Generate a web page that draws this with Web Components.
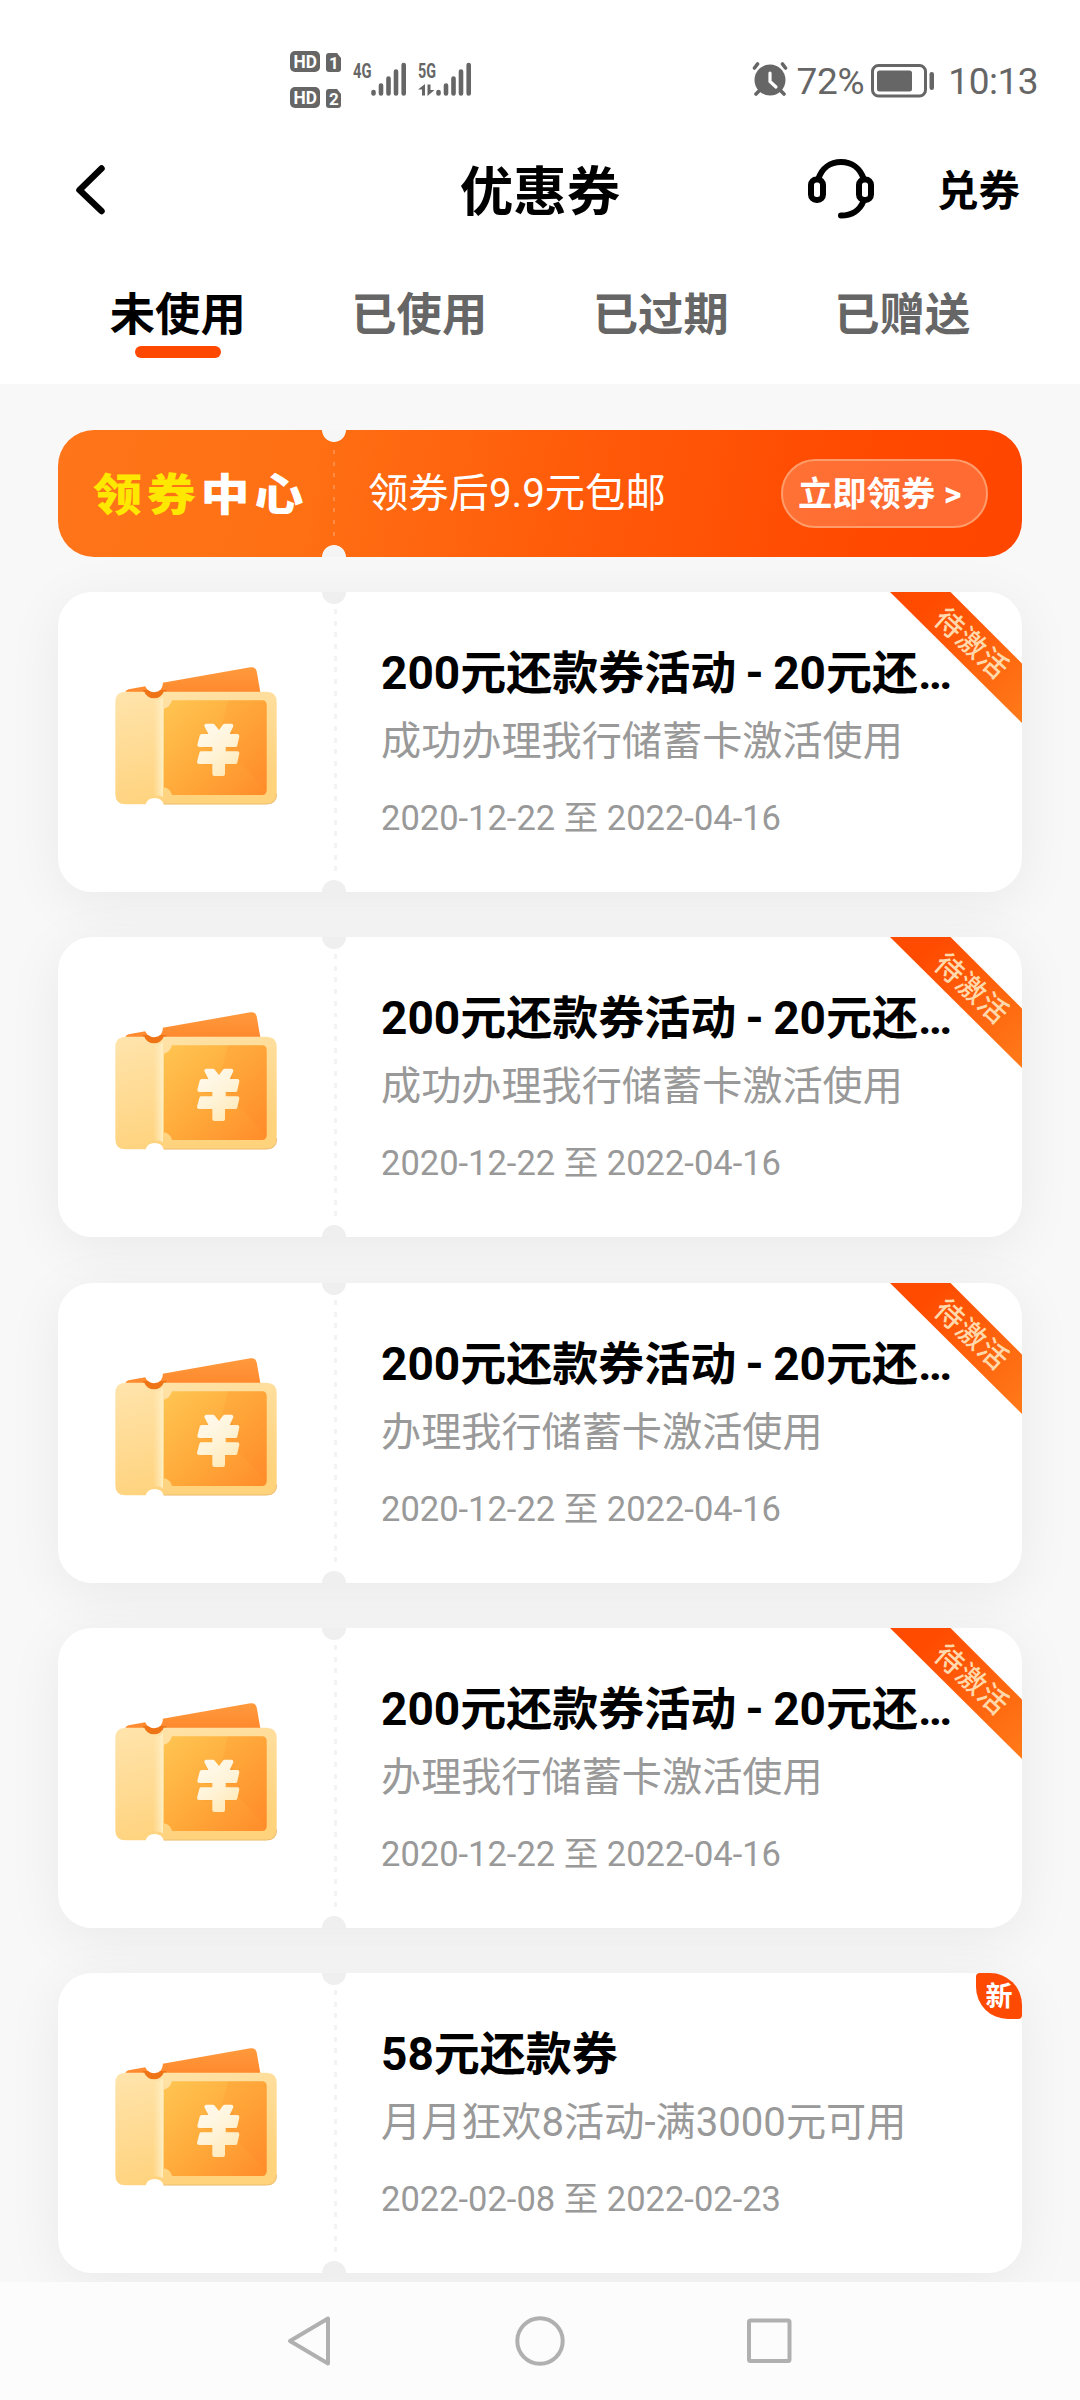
<!DOCTYPE html>
<html lang="zh-CN">
<head>
<meta charset="utf-8">
<title>优惠券</title>
<style>
html,body{margin:0;padding:0}
body{width:1080px;height:2400px;overflow:hidden;background:#f8f8f8;font-family:Roboto,"Noto Sans CJK SC",sans-serif}
</style>
</head>
<body>
<coupon-app></coupon-app>
<script>
const define = (name, html) => {
  const t = document.createElement('template');
  t.innerHTML = html;
  customElements.define(name, class extends HTMLElement {
    constructor() {
      super();
      this.attachShadow({mode: 'open'}).appendChild(t.content.cloneNode(true));
    }
  });
};

define('status-bar', `
<style>
:host{display:flex;height:142px;box-sizing:border-box;padding:40px 42px 0 282px;justify-content:space-between;color:#666}
svg{display:block;flex:none}
.right{display:flex;height:80px;align-items:center;font-size:37px;line-height:44px}
.pct{margin-left:9px;letter-spacing:-.3px;padding-top:4px}
.bat{margin-left:7px;margin-top:1px}
.time{margin-left:13px;letter-spacing:-.5px;padding-top:4px}
</style>
<svg width="200" height="80" viewBox="282 40 200 80" fill="#666" font-family="Roboto" font-weight="700">
  <rect x="290" y="51" width="30" height="21" rx="5"/>
  <path d="M329 53h8l4 5v11q0 3-3 3h-9q-3 0-3-3V56q0-3 3-3z"/>
  <rect x="290" y="87" width="30" height="21" rx="5"/>
  <path d="M329 89h8l4 5v11q0 3-3 3h-9q-3 0-3-3V92q0-3 3-3z"/>
  <g fill="#fff" font-size="18.5">
    <text x="293.5" y="68.2" textLength="23.5" lengthAdjust="spacingAndGlyphs">HD</text>
    <text x="293.5" y="104.2" textLength="23.5" lengthAdjust="spacingAndGlyphs">HD</text>
    <text x="329" y="69" font-size="17">1</text>
    <text x="329" y="105" font-size="17">2</text>
  </g>
  <g font-size="20">
    <text x="353" y="77.5" textLength="18.5" lengthAdjust="spacingAndGlyphs">4G</text>
    <text x="418" y="77.5" textLength="18" lengthAdjust="spacingAndGlyphs">5G</text>
  </g>
  <g stroke="#666" stroke-width="4.6" stroke-linecap="round">
    <path d="M373.5 92v1.5M381 85.500v8M388.500 78.500v15M396 71.500v22M403.700 65v28.500"/>
    <path d="M438.500 92v1.500M446 85.500v8M453.500 78.500v15M461 71.500v22M468.700 65v28.500"/>
  </g>
  <path d="M425 84v11.500h-3v-6h-4zM427.500 84.500h3v5.500h4l-7 6z"/>
</svg>
<div class="right">
  <svg width="36" height="36" viewBox="0 0 36 36" fill="none" stroke="#666" stroke-linecap="round" style="margin-top:-4px">
    <circle cx="18" cy="20" r="15.500" fill="#666" stroke="none"/>
    <path d="M2.500 8l3-4M33.500 8l-3-4M7 31l-3 3M29 31l3 3" stroke-width="3.600"/>
    <path d="M18 13v8.500l6 5.500" stroke="#fff" stroke-width="3.200" stroke-linejoin="round"/>
  </svg>
  <span class="pct">72%</span>
  <svg class="bat" width="64" height="34" viewBox="0 0 64 34" fill="#666">
    <rect x="1.500" y="1.500" width="53" height="30.500" rx="6" fill="none" stroke="#666" stroke-width="3"/>
    <rect x="6" y="6.500" width="35" height="21" rx="2.500"/>
    <rect x="58.500" y="8" width="4.500" height="18" rx="2.200"/>
  </svg>
  <span class="time">10:13</span>
</div>`);

define('title-bar', `
<style>
:host{display:grid;grid-template-columns:1fr auto 1fr;align-items:center;height:96px;padding:0 60px 0 73px;color:#000;font-weight:700}
h1{margin:0;font-size:53.500px;line-height:64px;font-weight:700;padding-right:13px;padding-top:5px}
svg{display:block}
.r{display:flex;justify-content:flex-end;align-items:center;gap:62px;font-size:41.500px;line-height:50px}
.r svg{margin-top:-2px}
.r span{padding-top:4px}
</style>
<svg width="36" height="54" viewBox="0 0 36 54" fill="none" stroke="#000" stroke-width="6.500" stroke-linecap="round" stroke-linejoin="round"><path d="M28.500 5.500L6.500 27l22 21"/></svg>
<h1><slot></slot></h1>
<div class="r">
<svg width="68" height="62" viewBox="0 0 68 62" fill="none" stroke="#000" stroke-width="6" stroke-linecap="round">
  <path d="M11.500 20.500C15 10 23.500 4 34 4s19 6 22.500 16.500M56.500 43C53 52 45 57.500 34 57.500"/>
  <rect x="4" y="21.500" width="12" height="20.500" rx="5.500"/>
  <rect x="52" y="21.500" width="12" height="20.500" rx="5.500"/>
</svg>
<span><slot name="action"></slot></span></div>`);

define('tab-item', `
<style>
:host{flex:1;display:flex;flex-direction:column;align-items:center;font-size:45.300px;line-height:56px;font-weight:700;color:#666}
:host([active]){color:#000}
i{display:none;width:86px;height:12px;border-radius:6px;background:#ff4800;margin-top:2px}
:host([active]) i{display:block}
</style><span><slot></slot></span><i></i>`);

define('tab-row', `
<style>:host{display:flex;height:146px;box-sizing:border-box;padding:50px 57px 0}</style><slot></slot>`);

define('promo-banner', `
<style>
:host{display:flex;align-items:center;position:relative;box-sizing:border-box;height:127px;border-radius:36px;padding:0 34px 0 35px;color:#fff;
 background:radial-gradient(circle at 276px 0,#f6f6f6 11.500px,transparent 12.300px),radial-gradient(circle at 276px 100%,#f4f4f4 11.500px,transparent 12.300px),linear-gradient(100deg,#ff7519 0%,#ff7014 25%,#ff5a09 55%,#ff4800 85%,#ff4600 100%)}
.logo{width:241px;display:flex;font:900 49px/50px "Noto Sans CJK SC",sans-serif;letter-spacing:4.800px;flex:none;transform:scaleY(.9);margin-top:-4px}
.logo b{font-weight:900;color:#ffe800}
.dots{width:2px;height:88px;flex:none;background:repeating-linear-gradient(#ff8b45 0 4px,transparent 4px 11.700px);margin-left:-1px}
.msg{margin-left:33px;font-size:40.300px;line-height:50px;flex:1;white-space:nowrap;padding-top:1px}
.btn{box-sizing:border-box;width:207px;height:69px;border:2.500px solid #ff9c6c;border-radius:35px;background:rgba(255,255,255,.2);font-size:34.300px;font-weight:700;line-height:67px;padding-left:15px;white-space:nowrap}
</style>
<div class="logo"><b>领券</b><span>中心</span></div><div class="dots"></div>
<div class="msg"><slot></slot></div><div class="btn">立即领券 &gt;</div>`);

define('ticket-icon', `
<style>:host{display:block}svg{display:block}</style>
<svg width="166.700" height="141.700" viewBox="70 75 500 425">
  <defs>
    <linearGradient id="a" x1="0" y1="0" x2=".35" y2="1"><stop offset="0" stop-color="#ffe4ac"/><stop offset="1" stop-color="#ffd27c"/></linearGradient>
    <linearGradient id="b" x1="0" y1="0" x2="1" y2="1"><stop offset="0" stop-color="#ffc552"/><stop offset=".5" stop-color="#ffab3b"/><stop offset="1" stop-color="#ff8c2a"/></linearGradient>
    <linearGradient id="c" x1="0" y1="0" x2="0" y2="1"><stop offset="0" stop-color="#ff9a3d"/><stop offset="1" stop-color="#ff8228"/></linearGradient>
    <linearGradient id="d" x1="0" y1="0" x2="1" y2="0"><stop offset="0" stop-color="#ffe9b8" stop-opacity="0"/><stop offset="1" stop-color="#ffefc4"/></linearGradient>
    <linearGradient id="e" gradientUnits="userSpaceOnUse" x1="330" y1="250" x2="440" y2="400"><stop offset="0" stop-color="#fffaf0"/><stop offset=".5" stop-color="#fff4da"/><stop offset="1" stop-color="#ffe8b4"/></linearGradient>
  </defs>
  <path d="M107 156q2-6 10-8l50-9q10 20 30 17 22-3 22-28l263-46q15-3 19 12l11 63v30H150z" fill="url(#c)"/>
  <path d="M160 150h70v40h-70z" fill="#ef7415"/>
  <path d="M167 139q10 20 30 17 22-3 22-28z" fill="#fff"/>
  <path d="M108 155h56a30 27 0 0 0 58 0h308q31 0 31 31v276q0 31-31 31H222a28 26 0 0 0-54 0h-60q-31 0-31-31V186q0-31 31-31z" fill="url(#a)"/>
  <path d="M190 182q22 0 30-12v302q-8-7-30-6z" fill="url(#d)"/>
  <path d="M222 492h308q31 0 31-31" fill="none" stroke="#e9b86e" stroke-width="2.500"/>
  <path d="M247 181h270q14 0 14 14v256q0 14-14 14H247q-4-18-24-23V206q18-4 24-25z" fill="url(#b)"/>
  <path d="M415 181h102q14 0 14 14v256L386 300z" fill="#ff7e2a" opacity=".13"/>
  <g fill="none" stroke="#f08a22" opacity=".3" stroke-linejoin="round" stroke-width="33" transform="translate(3 5)"><path d="M360 262l27 37 28-37M339 302h94M339 352h94M387 300v92"/></g>
  <g fill="url(#e)" stroke="url(#e)" stroke-width="12" stroke-linejoin="round"><path d="M350 257h20l18 23 17-23h20l-14 31h32l-6 27h-35v25h41l-6 26h-37v36h-26v-36h-46l7-26h39v-25h-45l7-27h30z"/></g>
</svg>`);

define('coupon-card', `
<style>
:host{display:flex;position:relative;box-sizing:border-box;height:300px;flex:none;border-radius:34px;background:#fff;box-shadow:0 10px 55px rgba(0,0,0,.062)}
.pic{width:276px;box-sizing:border-box;padding:73px 0 0 55.300px;flex:none}
.cut{width:3px;margin:17px 0 14px;background:repeating-linear-gradient(#f3f3f3 0 5px,transparent 5px 11.700px);flex:none}
.n{position:absolute;left:264px;width:24px;height:12px;background:#efefef}
.n.t{top:0;border-radius:0 0 12px 12px}.n.b{bottom:0;border-radius:12px 12px 0 0}
.txt{padding:53px 0 0 44px;white-space:nowrap}
h2{margin:0;font-size:46px;line-height:56px;font-weight:700;color:#000;word-spacing:-2px}
p{margin:13px 0 0;font-size:40.150px;line-height:56px;color:#999}
time{display:block;margin-top:26px;font-size:34.500px;line-height:44px;color:#999}
slot[name=mark]{display:block;position:absolute;right:0;top:0}
</style>
<div class="pic"><ticket-icon></ticket-icon></div><div class="cut"></div>
<div class="n t"></div><div class="n b"></div>
<div class="txt"><h2><slot name="title"></slot></h2><p><slot name="desc"></slot></p><time><slot></slot></time></div>
<slot name="mark"></slot>`);

define('pending-ribbon', `
<style>:host{display:block}svg{display:block}</style>
<svg width="132" height="132" viewBox="0 0 132 132">
<defs><linearGradient id="g" x1="0" y1="0" x2="1" y2="1"><stop offset=".2" stop-color="#ff4b00"/><stop offset="1" stop-color="#ff7b1a"/></linearGradient></defs>
<path d="M0 0H60.500L132 71.500V131z" fill="url(#g)"/>
<text x=".5" y="10.500" text-anchor="middle" transform="translate(81.700 51) rotate(42.500)" font-family="Noto Sans CJK SC" font-weight="500" font-size="28.500" letter-spacing="1" fill="#ffd9ac">待激活</text>
</svg>`);

define('new-badge', `
<style>:host{display:flex;width:46px;height:46px;background:#ff4a04;border-radius:4px 32px 4px 32px;justify-content:center;align-items:center;color:#fff;font-size:27px;line-height:40px;font-weight:700}</style><span style="padding-top:1px">新</span>`);

define('nav-bar', `
<style>:host{display:flex;justify-content:space-between;height:118px;box-sizing:border-box;padding:31px 286px 0 284px;background:#fcfcfc;position:relative}svg{display:block}</style>
<svg width="52" height="56" viewBox="0 0 52 56" fill="none" stroke="#b0b0b0" stroke-width="4" stroke-linejoin="round"><path d="M44 5.500v45L6 28z"/></svg>
<svg width="56" height="56" viewBox="0 0 56 56" fill="none" stroke="#b0b0b0" stroke-width="4"><circle cx="28" cy="28" r="22.700"/></svg>
<svg width="50" height="56" viewBox="0 0 50 56" fill="none" stroke="#b0b0b0" stroke-width="4"><rect x="5" y="7.500" width="40.500" height="40.500" rx="1.500"/></svg>`);

const card = (title, desc, date, mark) =>
  `<coupon-card><span slot="title">${title}</span><span slot="desc">${desc}</span>${date}<${mark} slot="mark"></${mark}></coupon-card>`;
const t = '200元还款券活动 - 20元还…', d = '2020-12-22 至 2022-04-16';

define('coupon-app', `
<style>
:host{display:flex;flex-direction:column;width:1080px;height:2400px}
header{background:#fff;height:384px;flex:none}
main{height:1898px;flex:none;overflow:hidden;box-sizing:border-box;padding:46px 58px 0;background:#f8f8f8}
.list{display:flex;flex-direction:column;gap:45.400px;margin-top:34.800px}
promo-banner{z-index:1}
</style>
<header><status-bar></status-bar>
<title-bar>优惠券<span slot="action">兑券</span></title-bar>
<tab-row><tab-item active>未使用</tab-item><tab-item>已使用</tab-item><tab-item>已过期</tab-item><tab-item>已赠送</tab-item></tab-row></header>
<main><promo-banner>领券后9.9元包邮</promo-banner>
<div class="list">
${card(t, '成功办理我行储蓄卡激活使用', d, 'pending-ribbon')}
${card(t, '成功办理我行储蓄卡激活使用', d, 'pending-ribbon')}
${card(t, '办理我行储蓄卡激活使用', d, 'pending-ribbon')}
${card(t, '办理我行储蓄卡激活使用', d, 'pending-ribbon')}
${card('58元还款券', '月月狂欢8活动-满3000元可用', '2022-02-08 至 2022-02-23', 'new-badge')}
</div></main>
<nav-bar></nav-bar>`);
</script>
</body>
</html>
